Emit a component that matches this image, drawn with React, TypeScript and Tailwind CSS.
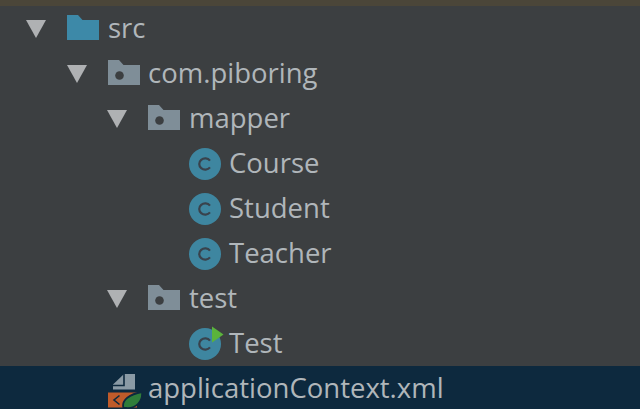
import React from "react";

const Arrow = () => (
  <svg width="20" height="20" viewBox="0 0 20 20" className="shrink-0">
    <path d="M0 1H20L10 19Z" fill="#afb1b3" />
  </svg>
);

const Folder = ({ blue }: { blue?: boolean }) => (
  <svg width="32" height="26" viewBox="0 0 32 26" className="mb-[1px] shrink-0">
    <path d="M0 0H11L15.5 5H32V25H0Z" fill={blue ? "#3d89a8" : "#7f8e98"} />
    {!blue && <circle cx="11.5" cy="15.5" r="4.3" fill="#3c3f41" />}
  </svg>
);

const ClassIcon = ({ run }: { run?: boolean }) => (
  <svg width="36" height="36" viewBox="0 0 36 36" className="shrink-0 overflow-visible">
    <circle cx="16" cy="18" r="16" fill="#3e86a0" />
    <path d="M21 14.6A6 5.6 0 1 0 21 21.4" fill="none" stroke="#39424c" strokeWidth="2.2" />
    {run && <path d="M23 0.5L34.5 8.5L23 16.5Z" fill="#5ab33c" />}
  </svg>
);

const XmlIcon = () => (
  <svg width="36" height="36" viewBox="0 0 36 36" className="shrink-0 overflow-visible">
    <path d="M5 18.5V13.5L16 3H27V18.5Z" fill="#8a9aa5" />
    <path d="M16 3V14.5H5" fill="none" stroke="#0d293e" strokeWidth="1.6" />
    <rect x="0" y="21.5" width="29" height="15" fill="#bf5b2a" />
    <path d="M11.5 24.5L6 29L11.5 33.5" fill="none" stroke="#0d293e" strokeWidth="1.6" />
    <path d="M15.5 37C13 29 22 23 34 21C35 30 28 38 18 37Z" fill="#2f7d3a" stroke="#0d293e" strokeWidth="1.8" />
  </svg>
);

const Row = ({
  indent,
  arrow,
  icon,
  label,
  selected,
  iconBox = "w-[40px]",
}: {
  indent: string;
  arrow?: boolean;
  icon: React.ReactNode;
  label: string;
  selected?: boolean;
  iconBox?: string;
}) => (
  <div className={`flex h-[45px] items-center ${indent} ${selected ? "bg-[#0d293e]" : ""}`}>
    {arrow && <div className="mr-[21px] flex"><Arrow /></div>}
    <div className={`flex shrink-0 items-center ${iconBox}`}>{icon}</div>
    <span className="mb-[2px] text-[27.5px] leading-none text-[#b0b6ba] whitespace-nowrap">{label}</span>
  </div>
);

export default function App() {
  return (
    <div className="h-[409px] w-[640px] overflow-hidden bg-[#3c3f41] font-['Open_Sans','Noto_Sans',sans-serif]">
      <div className="h-[6px] bg-[#4b4639]" />
      <Row indent="pl-[26px]" arrow icon={<Folder blue />} label="src" iconBox="w-[41px]" />
      <Row indent="pl-[67px]" arrow icon={<Folder />} label="com.piboring" />
      <Row indent="pl-[107px]" arrow icon={<Folder />} label="mapper" iconBox="w-[41px]" />
      <Row indent="pl-[189px]" icon={<ClassIcon />} label="Course" />
      <Row indent="pl-[189px]" icon={<ClassIcon />} label="Student" />
      <Row indent="pl-[189px]" icon={<ClassIcon />} label="Teacher" />
      <Row indent="pl-[107px]" arrow icon={<Folder />} label="test" iconBox="w-[41px]" />
      <Row indent="pl-[189px]" icon={<ClassIcon run />} label="Test" />
      <Row indent="pl-[108px]" icon={<XmlIcon />} label="applicationContext.xml" selected />
    </div>
  );
}
